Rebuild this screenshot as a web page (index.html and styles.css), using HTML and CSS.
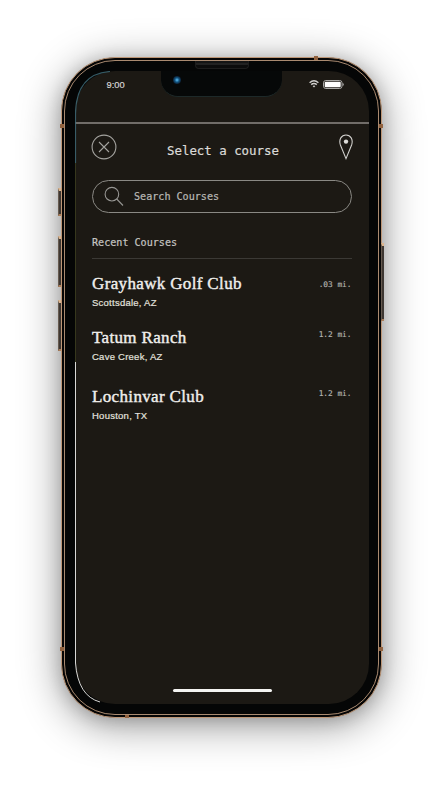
FILE: index.html
```html
<!DOCTYPE html>
<html lang="en">
<head>
<meta charset="utf-8">
<title>Select a course</title>
<link rel="stylesheet" href="styles.css">
</head>
<body>
<div class="phone">
  <i class="key key-mute"></i><i class="key key-up"></i><i class="key key-down"></i><i class="key key-power"></i>
  <i class="band band-tl"></i><i class="band band-tr"></i><i class="band band-bl"></i><i class="band band-br"></i>
  <i class="band band-top"></i><i class="band band-bottom"></i>
  <div class="bezel">
    <i class="speaker"></i>
    <main class="screen">
      <div class="notch"><i class="camera"></i></div>
      <div class="status">
        <span class="time">9:00</span>
        <span class="status-icons">
          <svg width="10" height="8" viewBox="0 0 10 8" fill="none" stroke="#d0cfcd" stroke-width="1.4"><path d="M.6 2.8Q5-1.2 9.4 2.8M2.2 4.6Q5 2.2 7.8 4.6"/><path d="M3.6 6.1Q5 5 6.4 6.1L5 7.6Z" fill="#d0cfcd" stroke="none"/></svg>
          <svg width="21" height="9" viewBox="0 0 21 9"><rect x=".5" y=".5" width="18.500" height="8" rx="2.3" fill="none" stroke="#aaa9a6"/><rect x="1.700" y="1.700" width="16" height="5.600" rx="1" fill="#fff"/><path d="M19.7 3v3q1-.4 1-1.5t-1-1.5" fill="#bbb"/></svg>
        </span>
      </div>
      <header class="header">
        <svg class="close" width="26" height="26" viewBox="0 0 26 26" fill="none" stroke="#a3a29e" stroke-width="1.1"><circle cx="13" cy="13" r="11.900"/><path d="M8 8l10 10M18 8L8 18"/></svg>
        <h1>Select a course</h1>
        <svg class="pin" width="14" height="26" viewBox="0 0 14 26" fill="none" stroke="#cfcecb" stroke-width="1.1"><path d="M7 24.6L1.400 11C-.5 5.400 2.500 1 7 1s7.500 4.400 5.600 10Z"/><circle cx="7" cy="7.600" r="2.200" fill="#deddda" stroke="none"/></svg>
      </header>
      <div class="search">
        <svg width="20" height="21" viewBox="0 0 20 21" fill="none" stroke="#969592" stroke-width="1.1"><circle cx="7.900" cy="8.200" r="6.800"/><path d="M12.700 13L19 19.500"/></svg>
        <span>Search Courses</span>
      </div>
      <h2>Recent Courses</h2>
      <ul class="courses">
        <li class="first"><div><h3>Grayhawk Golf Club</h3><p>Scottsdale, AZ</p></div><span class="distance">.03 mi.</span></li>
        <li class="second"><div><h3>Tatum Ranch</h3><p>Cave Creek, AZ</p></div><span class="distance">1.2 mi.</span></li>
        <li><div><h3>Lochinvar Club</h3><p>Houston, TX</p></div><span class="distance">1.2 mi.</span></li>
      </ul>
      <div class="home"></div>
    </main>
    <svg class="glint" width="294" height="634" viewBox="0 0 294 634" fill="none"><path d="M.5 92V43Q1 3 35 .5" stroke="#3d6975" stroke-opacity=".85" stroke-width="1.200"/><path d="M.5 92V291" stroke="#36371d"/><path d="M.5 291V592Q3 625 25 631" stroke="#d7d7d5"/></svg>
  </div>
</div>
</body>
</html>
```

FILE: styles.css
```css
* { box-sizing: border-box; }
body { margin: 0; height: 786px; overflow: hidden; background: #fff; display: flex; padding: 57px 0 0 61px; }
h1, h2, h3, p, ul { margin: 0; padding: 0; font-weight: normal; }
svg { display: block; }
.phone {
  position: relative; flex: none; width: 321px; height: 661px; padding: 2px;
  background: #050505; border: 1px solid #bd9676; border-radius: 54px;
  box-shadow: 0 7px 42px rgba(0,0,0,.42), 0 2px 16px rgba(0,0,0,.16);
}
.bezel {
  position: relative; width: 100%; height: 100%; padding: 10px 8px 10px 10px;
  background: #050606; border: 1px solid #a98a70; border-radius: 51px;
}
.screen {
  position: relative; width: 294px; height: 633px; overflow: hidden;
  display: flex; flex-direction: column; background: #1c1914; border-radius: 40px;
}
.glint { position: absolute; left: 10px; top: 10px; pointer-events: none; }
.notch { position: absolute; left: 86px; top: -1px; width: 121px; height: 27px; background: #060808; border-bottom: 1px solid #1d2929; border-radius: 0 0 17px 17px; }
.camera { position: absolute; left: 12px; top: 6px; width: 8px; height: 8px; border-radius: 50%; background: radial-gradient(#49a1d5 0 12%, #145783 38%, #0b1c30 72%); }
.speaker { position: absolute; z-index: 1; left: 130px; top: 0; width: 54px; height: 8px; background: linear-gradient(#151515 0 2px, #222 2px 4px, #0c0c0c 4px); border: 1px solid #1d1d1d; border-top: 0; border-radius: 0 0 4px 4px; }
.status { height: 53px; flex: none; padding: 8px 25px 0 31.5px; display: flex; justify-content: space-between; border-bottom: 2px solid #716d69; color: #d6d5d3; }
.time { font: 9.3px/12px "Liberation Sans", sans-serif; -webkit-text-stroke: .2px #d6d5d3; }
.status-icons { display: flex; height: 10px; gap: 4px; align-items: center; }
.header { height: 57px; flex: none; display: grid; grid-template-columns: 26px 1fr 14px; align-items: start; padding: 10px 16px 0; }
h1 { padding: 9px 0 0 50px; color: #dbdad7; font: 12.4px/16px "DejaVu Sans Mono", monospace; white-space: nowrap; -webkit-text-stroke: .2px #dbdad7; }
.search { height: 33px; flex: none; margin: -1px 17px 0 16.500px; border: 1.4px solid #8a8984; border-radius: 17px; display: flex; align-items: center; gap: 10px; padding-left: 11.500px; }
.search span { color: #bab9b6; font: 10.1px/14px "DejaVu Sans Mono", monospace; -webkit-text-stroke: .2px #bab9b6; }
h2 { flex: none; height: 46px; margin: 0 17px 0 17px; padding-top: 23px; color: #c6c5c2; border-bottom: 1px solid #3b3935; font: 10.1px/14px "DejaVu Sans Mono", monospace; -webkit-text-stroke: .2px #c6c5c2; }
.courses { list-style: none; margin: 14px 17px 0 17px; display: flex; flex-direction: column; }
li { display: flex; justify-content: space-between; height: 59px; }
li.first { height: 54px; }
h3 { color: #f0efec; font: 17px/22px "Liberation Serif", serif; letter-spacing: .35px; -webkit-text-stroke: .4px #f0efec; }
p { color: #e2e1de; font: 9.5px/13px "Liberation Sans", sans-serif; letter-spacing: .25px; margin-top: 1px; -webkit-text-stroke: .2px #e2e1de; }
.distance { color: #b4b3b0; font: 7.8px/10px "DejaVu Sans Mono", monospace; padding: 3px .5px 0 0; -webkit-text-stroke: .15px #b4b3b0; }
.first .distance { padding-top: 7px; }
.home { width: 99px; height: 3px; border-radius: 2px; background: #f4f4f2; margin: auto 0 12px 98px; }
.key { position: absolute; left: -4px; width: 3px; background: #3e3732; border-top: 3px solid #dbb58f; border-bottom: 2px solid #aa7d59; border-left: 1px solid #675b50; }
.key-mute { top: 130px; height: 28px; }
.key-up { top: 178px; height: 51px; }
.key-down { top: 242px; height: 51px; }
.key-power { left: auto; right: -3px; top: 185px; height: 78px; }
.band { position: absolute; width: 4px; height: 4px; background: #91623f; }
.band-tl, .band-bl { left: -2px; }
.band-tr, .band-br { right: -2px; }
.band-tl, .band-tr { top: 66px; }
.band-bl, .band-br { top: 589px; }
.band-top { left: 252px; top: -2px; }
.band-bottom { left: 63px; bottom: -1px; }
```
